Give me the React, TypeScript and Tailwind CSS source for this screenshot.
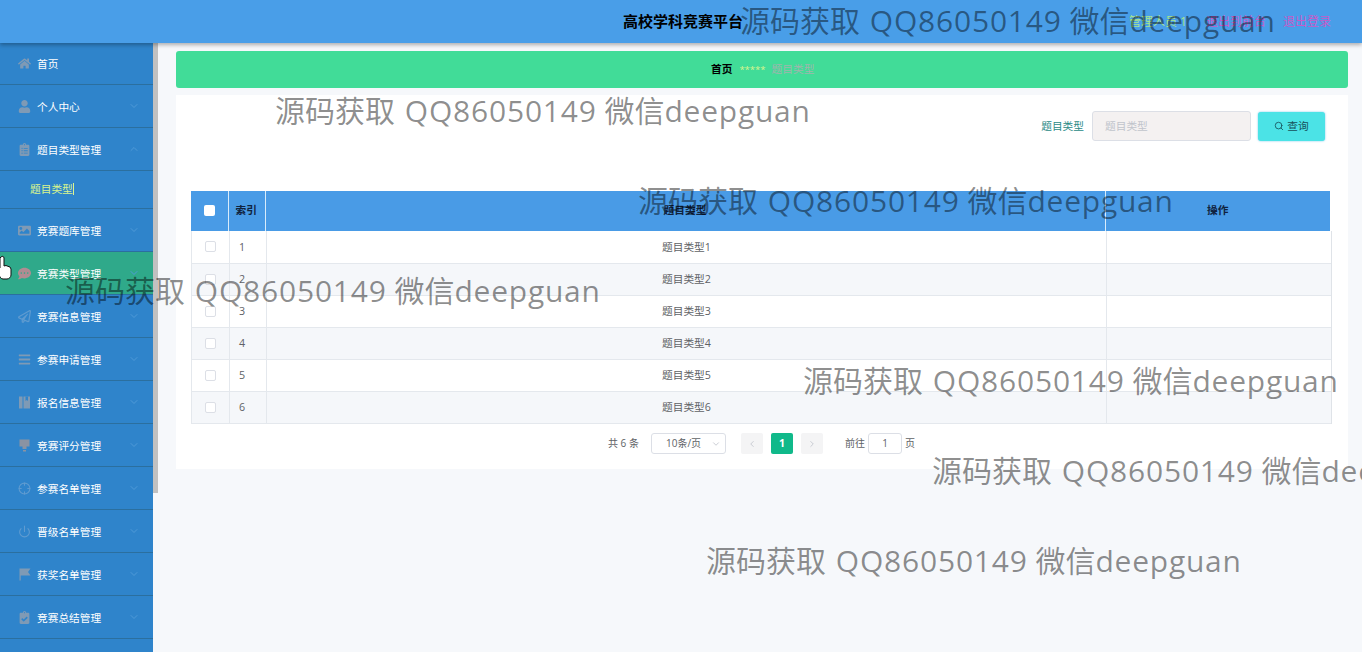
import React from "react";
import { FaHome, FaUser, FaClipboardList, FaImage, FaCommentDots, FaRegPaperPlane, FaBars, FaClipboardCheck } from "react-icons/fa";
import { LuCrosshair, LuPower, LuChevronDown, LuChevronUp, LuChevronLeft, LuChevronRight, LuSearch } from "react-icons/lu";

const FONT = "font-['Open_Sans','Noto_Sans_CJK_SC',sans-serif]";

type IconProps = { className?: string };

const BookIcon = ({ className }: IconProps) => (
  <svg className={className} viewBox="0 0 13 13" fill="currentColor">
    <rect x="1" y="0.5" width="3.5" height="12" />
    <path d="M5.5 0.5h6.5v12H5.5z" />
    <path d="M7.5 0.5h2.5v4.5l-1.25-1-1.25 1z" fill="#2f84cb" />
  </svg>
);
const PinIcon = ({ className }: IconProps) => (
  <svg className={className} viewBox="0 0 13 13" fill="currentColor">
    <path d="M1.5 0.5h10v7h-3v2.5h-4V7.5h-3z" />
    <rect x="5" y="11" width="3" height="1.5" />
  </svg>
);
const FlagIcon = ({ className }: IconProps) => (
  <svg className={className} viewBox="0 0 13 13" fill="currentColor">
    <path d="M1.5 0.5h11l-2.5 3.5 2.5 3.5H2.7v5H1.5z" />
  </svg>
);

const menu = [
  { label: "首页", Icon: FaHome, arrow: false, tone: "text-[#7f9ab5]" },
  { label: "个人中心", Icon: FaUser, tone: "text-[#7f9ab5]" },
  { label: "题目类型管理", Icon: FaClipboardList, open: true, tone: "text-[#7f9ab5]" },
  { label: "竞赛题库管理", Icon: FaImage, tone: "text-[#7f9ab5]" },
  { label: "竞赛类型管理", Icon: FaCommentDots, active: true, tone: "text-[#b08c92]" },
  { label: "竞赛信息管理", Icon: FaRegPaperPlane, tone: "text-[#5f9bd0]" },
  { label: "参赛申请管理", Icon: FaBars, tone: "text-[#7f9ab5]" },
  { label: "报名信息管理", Icon: BookIcon, tone: "text-[#7f9ab5]" },
  { label: "竞赛评分管理", Icon: PinIcon, tone: "text-[#8a93a3]" },
  { label: "参赛名单管理", Icon: LuCrosshair, tone: "text-[#5f9bd0]" },
  { label: "晋级名单管理", Icon: LuPower, tone: "text-[#5f9bd0]" },
  { label: "获奖名单管理", Icon: FlagIcon, tone: "text-[#7f9ab5]" },
  { label: "竞赛总结管理", Icon: FaClipboardCheck, tone: "text-[#7f9ab5]" },
];

const marks = [
  "left-[740px] top-[-1px]",
  "left-[275px] top-[89px]",
  "left-[638px] top-[179px]",
  "left-[65px] top-[269px]",
  "left-[803px] top-[359px]",
  "left-[932px] top-[449px]",
  "left-[706px] top-[539px]",
];

function Sidebar() {
  return (
    <aside className="w-[153px] shrink-0 -mt-[1px] bg-[#2f84cb] overflow-hidden">
      {menu.map((m) => (
        <div key={m.label}>
          <div
            className={`relative h-[43px] flex items-center border-b border-[#2b6f9f] pt-[2px] pl-[37px] text-[10.7px] text-white ${
              m.active ? "bg-[#2fa98a]" : ""
            }`}
          >
            <m.Icon className={`absolute left-[18px] top-[15px] w-[13px] h-[13px] ${m.tone}`} />
            <span>{m.label}</span>
            {m.arrow !== false &&
              (m.open ? (
                <LuChevronUp className="absolute right-[13px] top-[15px] w-[12px] h-[12px] text-[#4f9ad8]" />
              ) : (
                <LuChevronDown className="absolute right-[13px] top-[15px] w-[12px] h-[12px] text-[#4f9ad8]" />
              ))}
          </div>
          {m.open && (
            <div className="h-[38px] flex items-center border-b border-[#2b6f9f] pb-[2px] pl-[30px] text-[10.7px] text-[#d9f58e]">
              <span className="border-r border-[#d9f58e] leading-[12px]">题目类型</span>
            </div>
          )}
        </div>
      ))}
    </aside>
  );
}

function Table() {
  const rows = [1, 2, 3, 4, 5, 6];
  return (
    <div className="ml-[15px] text-[10.7px] text-[#606266]">
      <table className="w-[1139px] table-fixed border-collapse">
        <thead>
          <tr className="h-[40px] bg-[#499be6] text-[#10233f] font-semibold">
            <th className="w-[37px] pb-[2px] border-r border-[#d8ecfb]">
              <span className="block mx-auto w-[11px] h-[11px] rounded-[2px] bg-white" />
            </th>
            <th className="w-[37px] pb-[2px] border-r border-[#d8ecfb] text-left pl-[7px]">索引</th>
            <th className="w-[840px] pb-[2px] border-r border-[#d8ecfb]">题目类型</th>
            <th className="pb-[2px]">操作</th>
          </tr>
        </thead>
      </table>
      <table className="w-[1141px] table-fixed border-collapse">
        <tbody>
          {rows.map((n) => (
            <tr key={n} className={`h-[32px] border-b border-[#e4e8ed] ${n % 2 === 0 ? "bg-[#f5f7fa]" : "bg-white"}`}>
              <td className="w-[38px] border-l border-r border-[#e4e8ed]">
                <span className="block mx-auto w-[11px] h-[11px] rounded-[2px] border border-[#dcdfe6] bg-white" />
              </td>
              <td className="w-[37px] border-r border-[#e4e8ed] pl-[9px]">{n}</td>
              <td className="w-[840px] border-r border-[#e4e8ed] text-center">题目类型{n}</td>
              <td className="border-r border-[#dfe3e8]" />
            </tr>
          ))}
        </tbody>
      </table>
    </div>
  );
}

function Pager() {
  return (
    <div className="mt-[9px] ml-[432px] h-[22px] flex items-center text-[10px] text-[#606266]">
      <span className="w-[43px]">共 6 条</span>
      <div className="w-[75px] h-[21px] flex items-center justify-between border border-[#dcdfe6] rounded-[3px] pl-[14px] pr-[4px]">
        <span>10条/页</span>
        <LuChevronDown className="w-[10px] h-[10px] text-[#c0c4cc]" />
      </div>
      <div className="ml-[15px] w-[22px] h-[21px] rounded-[2px] bg-[#f4f4f5] flex items-center justify-center text-[#c0c4cc]">
        <LuChevronLeft className="w-[10px] h-[10px]" />
      </div>
      <div className="ml-[8px] w-[22px] h-[21px] rounded-[2px] bg-[#10b98a] flex items-center justify-center text-white font-bold text-[10.5px]">
        1
      </div>
      <div className="ml-[8px] w-[22px] h-[21px] rounded-[2px] bg-[#f4f4f5] flex items-center justify-center text-[#c0c4cc]">
        <LuChevronRight className="w-[10px] h-[10px]" />
      </div>
      <span className="ml-[22px]">前往</span>
      <div className="ml-[3px] w-[34px] h-[21px] border border-[#dcdfe6] rounded-[3px] flex items-center justify-center">1</div>
      <span className="ml-[3px]">页</span>
    </div>
  );
}

export default function App() {
  return (
    <div className={`relative h-[652px] w-[1362px] overflow-hidden bg-[#f6f8fb] ${FONT}`}>
      <header className="relative z-10 h-[43px] bg-[#499ee8] shadow-[0_2px_4px_rgba(0,0,0,0.3)] flex items-center">
        <span className="ml-[623px] w-[120px] text-[15px] leading-none font-bold text-black whitespace-nowrap">高校学科竞赛平台</span>
        <span className="ml-[386px] w-[77px] pt-[1px] text-[12px] text-[#a9e58f] whitespace-nowrap">管理人员 1</span>
        <span className="w-[77px] pt-[1px] text-[12px] text-[#c65bc9] whitespace-nowrap">退出到前台</span>
        <span className="pt-[1px] text-[12px] text-[#c65bc9] whitespace-nowrap">退出登录</span>
      </header>
      <div className="flex h-[609px]">
        <Sidebar />
        <div className="w-[5px] shrink-0 self-start h-[450px] bg-[#c1c1c1]" />
        <main className="flex-1 pl-[18px] pr-[14px] pt-[8px]">
          <div className="h-[37px] rounded-[3px] bg-[#41dc98] flex items-center pl-[535px] text-[10.7px]">
            <span className="font-semibold text-black">首页</span>
            <span className="ml-[7px] text-[9.5px] leading-none text-[#d9f58e]">*****</span>
            <span className="ml-[6px] text-[#9fb5ad]">题目类型</span>
          </div>
          <section className="mt-[7px] h-[374px] bg-white pt-[16px]">
            <div className="h-[30px] flex items-center justify-end pr-[23px]">
              <span className="text-[10.7px] text-[#2a8a86]">题目类型</span>
              <div className="ml-[8px] w-[159px] h-[30px] flex items-center rounded-[3px] border border-[#dcdfe6] bg-[#f4f1f1] pl-[12px] text-[10.7px] text-[#c0c4cc]">
                题目类型
              </div>
              <button className="ml-[7px] w-[67px] h-[29px] rounded-[3px] bg-[#4be3e6] flex items-center justify-center gap-[3px] text-[10.7px] text-[#17505a] shadow-[0_0_2px_rgba(70,180,230,0.8)]">
                <LuSearch className="w-[10px] h-[10px]" />
                查询
              </button>
            </div>
            <div className="h-[50px]" />
            <Table />
            <Pager />
          </section>
        </main>
      </div>
      {marks.map((p) => (
        <div key={p} className={`absolute z-20 ${p} text-[30px] leading-[44px] text-black/45 whitespace-nowrap pointer-events-none`}>
          源码获取 <span className="ml-[2px] tracking-[0.8px]">QQ86050149</span> 微信<span className="tracking-[0.75px]">deepguan</span>
        </div>
      ))}
      <svg className="absolute z-20 left-[-3px] top-[255px]" width="16" height="26" viewBox="0 0 16 26">
        <path d="M4 2c1-1 3-1 3 1v8l2-.5 2 .8 2 .7 1 2v6c0 2-2 4-4 4H6c-2 0-3-2-4-4L0 14c-1-2 1-3 3-1V3z" fill="#fff" stroke="#111" strokeWidth="1" />
      </svg>
    </div>
  );
}
